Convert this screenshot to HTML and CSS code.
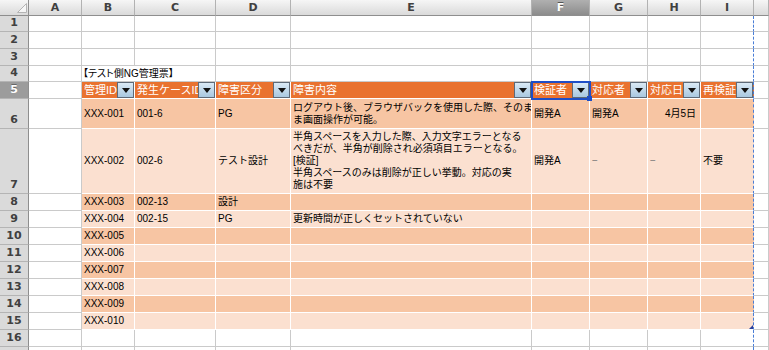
FILE: index.html
```html
<!DOCTYPE html>
<html lang="ja">
<head>
    <meta charset="UTF-8">
    <title>テスト側NG管理票</title>
    <link rel="stylesheet" href="styles.css">
</head>
<body>
    <table class="sheet">
        <colgroup>
            <col class="w-rh"><col class="w-a"><col class="w-b"><col class="w-c"><col class="w-d">
            <col class="w-e"><col class="w-f"><col class="w-g"><col class="w-h"><col class="w-i"><col class="w-j">
        </colgroup>
        <tr class="r-hd ch">
            <td class="corner">
                <svg width="10" height="10" viewBox="0 0 10 10"><polygon points="9.5,0.5 9.5,9.5 0.5,9.5" fill="#f6f6f6" stroke="#b4b4b4" stroke-width="1"/></svg>
            </td>
            <td>A</td><td>B</td><td>C</td><td>D</td><td>E</td><td class="on">F</td><td>G</td><td>H</td><td>I</td><td></td>
        </tr>
        <tr class="r-16">
            <td class="rh">1</td><td></td><td></td><td></td><td></td><td></td><td></td><td></td><td></td><td class="pb"></td><td></td>
        </tr>
        <tr class="r-17">
            <td class="rh">2</td><td></td><td></td><td></td><td></td><td></td><td></td><td></td><td></td><td class="pb"></td><td></td>
        </tr>
        <tr class="r-17">
            <td class="rh">3</td><td></td><td></td><td></td><td></td><td></td><td></td><td></td><td></td><td class="pb"></td><td></td>
        </tr>
        <tr class="r-16">
            <td class="rh">4</td><td></td><td class="ttl" colspan="2">【テスト側NG管理票】</td><td></td><td></td><td></td><td></td><td></td><td class="pb"></td><td></td>
        </tr>
        <tr class="r-17">
            <td class="rh on">5</td><td></td>
            <td class="t hd"><div class="fl"><span class="lb">管理ID</span><span class="dd"></span></div></td>
            <td class="t hd"><div class="fl"><span class="lb">発生ケースID</span><span class="dd"></span></div></td>
            <td class="t hd"><div class="fl"><span class="lb">障害区分</span><span class="dd"></span></div></td>
            <td class="t hd"><div class="fl"><span class="lb">障害内容</span><span class="dd"></span></div></td>
            <td class="t hd sel"><div class="fl"><span class="lb">検証者</span><span class="dd"></span></div></td>
            <td class="t hd"><div class="fl"><span class="lb">対応者</span><span class="dd"></span></div></td>
            <td class="t hd"><div class="fl"><span class="lb">対応日</span><span class="dd"></span></div></td>
            <td class="t hd pb"><div class="fl"><span class="lb">再検証</span><span class="dd"></span></div></td>
            <td></td>
        </tr>
        <tr class="r-30">
            <td class="rh">6</td><td></td>
            <td class="t dk">XXX-001</td><td class="t dk">001-6</td><td class="t dk">PG</td>
            <td class="t dk">ログアウト後、ブラウザバックを使用した際、そのま<br>ま画面操作が可能。</td>
            <td class="t dk">開発A</td><td class="t dk">開発A</td><td class="t dk num">4月5日</td><td class="t dk pb"></td><td></td>
        </tr>
        <tr class="r-65">
            <td class="rh">7</td><td></td>
            <td class="t lt">XXX-002</td><td class="t lt">002-6</td><td class="t lt">テスト設計</td>
            <td class="t lt">半角スペースを入力した際、入力文字エラーとなる<br>べきだが、半角が削除され必須項目エラーとなる。<br>[検証]<br>半角スペースのみは削除が正しい挙動。対応の実<br>施は不要</td>
            <td class="t lt">開発A</td><td class="t lt mu">−</td><td class="t lt mu">−</td><td class="t lt pb">不要</td><td></td>
        </tr>
        <tr class="r-17">
            <td class="rh">8</td><td></td>
            <td class="t dk">XXX-003</td><td class="t dk">002-13</td><td class="t dk">設計</td><td class="t dk"></td>
            <td class="t dk"></td><td class="t dk"></td><td class="t dk"></td><td class="t dk pb"></td><td></td>
        </tr>
        <tr class="r-17">
            <td class="rh">9</td><td></td>
            <td class="t lt">XXX-004</td><td class="t lt">002-15</td><td class="t lt">PG</td><td class="t lt">更新時間が正しくセットされていない</td>
            <td class="t lt"></td><td class="t lt"></td><td class="t lt"></td><td class="t lt pb"></td><td></td>
        </tr>
        <tr class="r-17">
            <td class="rh">10</td><td></td>
            <td class="t dk">XXX-005</td><td class="t dk"></td><td class="t dk"></td><td class="t dk"></td>
            <td class="t dk"></td><td class="t dk"></td><td class="t dk"></td><td class="t dk pb"></td><td></td>
        </tr>
        <tr class="r-17">
            <td class="rh">11</td><td></td>
            <td class="t lt">XXX-006</td><td class="t lt"></td><td class="t lt"></td><td class="t lt"></td>
            <td class="t lt"></td><td class="t lt"></td><td class="t lt"></td><td class="t lt pb"></td><td></td>
        </tr>
        <tr class="r-17">
            <td class="rh">12</td><td></td>
            <td class="t dk">XXX-007</td><td class="t dk"></td><td class="t dk"></td><td class="t dk"></td>
            <td class="t dk"></td><td class="t dk"></td><td class="t dk"></td><td class="t dk pb"></td><td></td>
        </tr>
        <tr class="r-17">
            <td class="rh">13</td><td></td>
            <td class="t lt">XXX-008</td><td class="t lt"></td><td class="t lt"></td><td class="t lt"></td>
            <td class="t lt"></td><td class="t lt"></td><td class="t lt"></td><td class="t lt pb"></td><td></td>
        </tr>
        <tr class="r-17">
            <td class="rh">14</td><td></td>
            <td class="t dk">XXX-009</td><td class="t dk"></td><td class="t dk"></td><td class="t dk"></td>
            <td class="t dk"></td><td class="t dk"></td><td class="t dk"></td><td class="t dk pb"></td><td></td>
        </tr>
        <tr class="r-17">
            <td class="rh">15</td><td></td>
            <td class="t lt">XXX-010</td><td class="t lt"></td><td class="t lt"></td><td class="t lt"></td>
            <td class="t lt"></td><td class="t lt"></td><td class="t lt"></td><td class="t lt pb grip"></td><td></td>
        </tr>
        <tr class="r-17">
            <td class="rh">16</td><td></td><td></td><td></td><td></td><td></td><td></td><td></td><td></td><td class="pb"></td><td></td>
        </tr>
        <tr class="r-4">
            <td class="rh"></td><td></td><td></td><td></td><td></td><td></td><td></td><td></td><td></td><td class="pb"></td><td></td>
        </tr>
    </table>
</body>
</html>
```

FILE: styles.css
```css
body {
    margin: 0;
    background-color: #ffffff;
    overflow: hidden;
    font-family: "Liberation Sans", "Noto Sans CJK JP", sans-serif;
    font-size: 10px;
    color: #000000;
}
.sheet {
    border-collapse: separate;
    border-spacing: 0;
    table-layout: fixed;
    width: 769px;
}
.w-rh { width: 29px; }
.w-a { width: 53px; }
.w-b { width: 53px; }
.w-c { width: 81px; }
.w-d { width: 75px; }
.w-e { width: 241px; }
.w-f { width: 58px; }
.w-g { width: 58px; }
.w-h { width: 53px; }
.w-i { width: 53px; }
.w-j { width: 15px; }

.r-hd { height: 16px; }
.r-16 { height: 16px; }
.r-17 { height: 17px; }
.r-30 { height: 30px; }
.r-65 { height: 65px; }
.r-4 { height: 4px; }

.sheet td {
    box-sizing: border-box;
    padding: 0 2px;
    border-right: 1px solid #cacaca;
    border-bottom: 1px solid #cacaca;
    white-space: nowrap;
    overflow: hidden;
    line-height: 12px;
    vertical-align: middle;
}

/* column letters */
.sheet .ch td {
    background: linear-gradient(#f6f6f6, #dadada);
    border-right-color: #b2b2b2;
    border-bottom-color: #8e8e8e;
    text-align: center;
    font-family: "DejaVu Sans", sans-serif;
    font-weight: bold;
    font-size: 11px;
    color: #404040;
}
.sheet .ch td.corner {
    border-right-color: #8e8e8e;
    text-align: right;
    vertical-align: bottom;
    padding: 0 1px 2px 0;
    line-height: 0;
}
.sheet .ch td.on {
    background: linear-gradient(#b0b0b0, #8c8c8c);
    color: #ffffff;
    text-shadow: 0 -1px 0 #555555;
}

/* row numbers */
.sheet td.rh {
    background-color: #dadada;
    border-right-color: #8e8e8e;
    border-bottom-color: #b4b4b4;
    text-align: center;
    vertical-align: bottom;
    padding: 0 0 1px 0;
    line-height: 14px;
    font-family: "DejaVu Sans", sans-serif;
    font-weight: bold;
    font-size: 11px;
    color: #404040;
}
.sheet td.rh.on {
    background-color: #9c9c9c;
    color: #ffffff;
    text-shadow: 0 -1px 0 #666666;
}
.sheet .r-4 td {
    border-bottom: none;
    line-height: 0;
    padding: 0;
}

.sheet td.ttl {
    padding-left: 1px;
    font-feature-settings: "palt";
}

/* table area */
.sheet td.t {
    border-color: #ffffff;
}
.sheet td.dk {
    background-color: #f7c5a3;
}
.sheet td.lt {
    background-color: #fbe0d0;
}
.sheet td.num {
    text-align: right;
    padding-right: 4px;
}
.sheet td.mu {
    color: #777777;
}
.sheet td.hd {
    background-color: #e9722f;
    color: #ffffff;
    font-size: 11px;
    padding: 0 0 0 2px;
}
.fl {
    display: flex;
    align-items: center;
    height: 16px;
}
.lb {
    flex: 1;
    min-width: 0;
    overflow: hidden;
}
.dd {
    flex: none;
    width: 17px;
    height: 16px;
    box-sizing: border-box;
    border: 1px solid #5e6a78;
    background: linear-gradient(#dae9f5, #a9c8e0);
    display: flex;
    align-items: center;
    justify-content: center;
}
.dd::after {
    content: "";
    border-left: 4px solid transparent;
    border-right: 4px solid transparent;
    border-top: 5px solid #111111;
}

/* active cell */
.sheet td.sel {
    position: relative;
    overflow: visible;
    outline: 2px solid #1f4ec6;
    outline-offset: -1px;
}
.sheet td.sel::after {
    content: "";
    position: absolute;
    right: -3px;
    bottom: -3px;
    width: 5px;
    height: 5px;
    background-color: #1f4ec6;
}

/* page break */
.sheet td.pb {
    border-right: 1px dashed #4a7ed6;
}

/* table resize grip */
.sheet td.grip {
    position: relative;
}
.sheet td.grip::after {
    content: "";
    position: absolute;
    right: 0;
    bottom: 0;
    border-left: 4px solid transparent;
    border-bottom: 4px solid #2b3f9c;
}
```
